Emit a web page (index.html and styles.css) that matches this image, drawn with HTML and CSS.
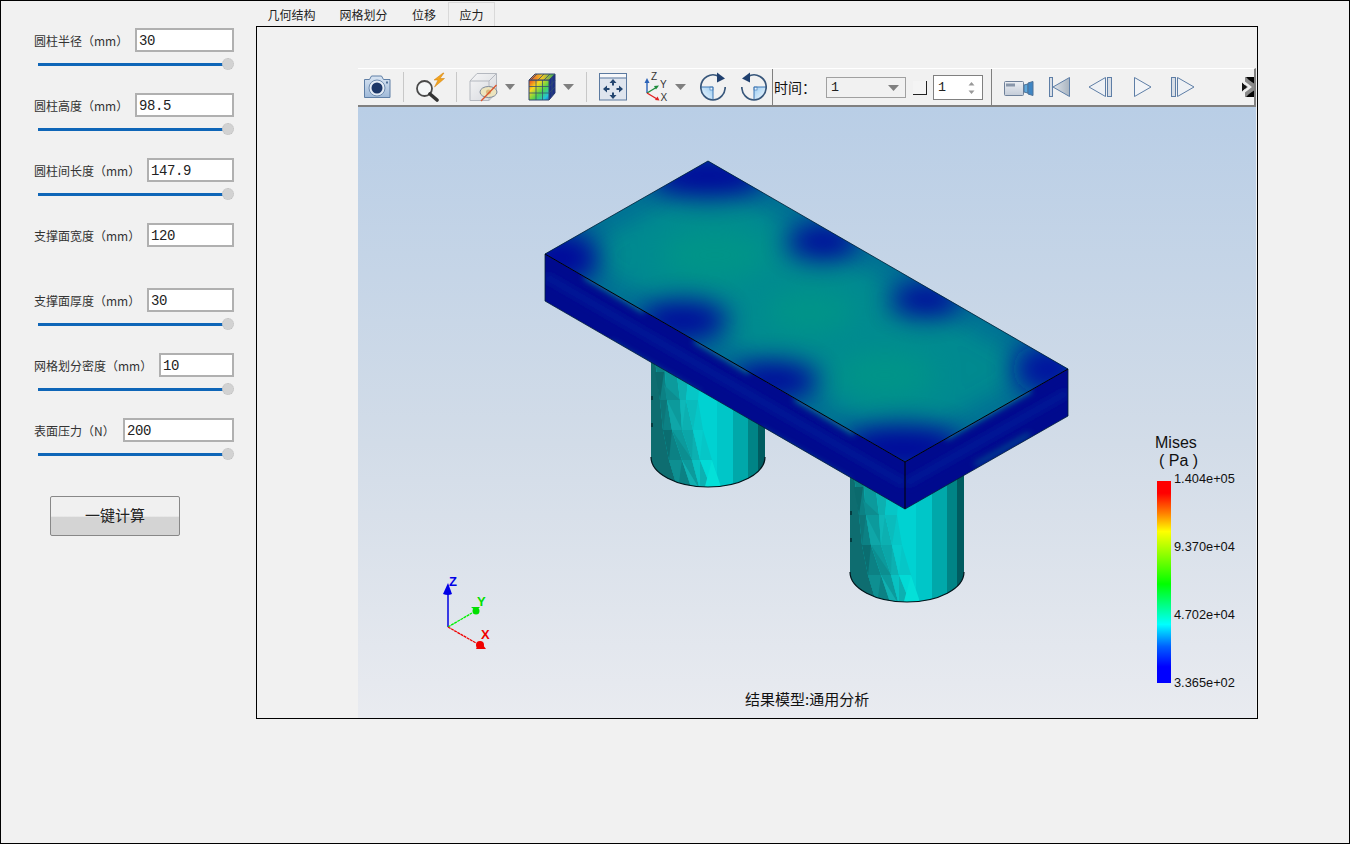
FILE: index.html
```html
<!DOCTYPE html>
<html lang="zh">
<head>
<meta charset="utf-8">
<title>应力</title>
<link rel="stylesheet" href="styles.css">
</head>
<body>
<div class="app">
  <aside class="side">
    <div class="row"><div class="line"><span class="lbl">圆柱半径&#xFF08;mm&#xFF09;</span><div class="field w99">30</div></div><div class="slider"><i class="track"></i><i class="thumb"></i></div></div>
    <div class="row"><div class="line"><span class="lbl">圆柱高度&#xFF08;mm&#xFF09;</span><div class="field w99">98.5</div></div><div class="slider"><i class="track"></i><i class="thumb"></i></div></div>
    <div class="row"><div class="line"><span class="lbl">圆柱间长度&#xFF08;mm&#xFF09;</span><div class="field w87">147.9</div></div><div class="slider"><i class="track"></i><i class="thumb"></i></div></div>
    <div class="row"><div class="line"><span class="lbl">支撑面宽度&#xFF08;mm&#xFF09;</span><div class="field w87">120</div></div></div>
    <div class="row"><div class="line"><span class="lbl">支撑面厚度&#xFF08;mm&#xFF09;</span><div class="field w87">30</div></div><div class="slider"><i class="track"></i><i class="thumb"></i></div></div>
    <div class="row"><div class="line"><span class="lbl">网格划分密度&#xFF08;mm&#xFF09;</span><div class="field w75">10</div></div><div class="slider"><i class="track"></i><i class="thumb"></i></div></div>
    <div class="row"><div class="line"><span class="lbl">表面压力&#xFF08;N&#xFF09;</span><div class="field w111">200</div></div><div class="slider"><i class="track"></i><i class="thumb"></i></div></div>
    <button class="calc" type="button">一键计算</button>
  </aside>
  <main class="main">
    <nav class="tabs">
      <span class="tab t1">几何结构</span>
      <span class="tab t2">网格划分</span>
      <span class="tab t3">位移</span>
      <span class="tab active">应力</span>
    </nav>
    <section class="frame">
      <div class="viewer">
        <div class="toolbar">
          <svg class="ml5" width="28" height="30" viewBox="0 0 28 30"><defs><linearGradient id="camg" x1="0" y1="0" x2="0" y2="1"><stop offset="0" stop-color="#d9e5f3"/><stop offset="1" stop-color="#9fb9d8"/></linearGradient></defs><path d="M1.500 7.500h5l2-3.500h10l2 3.500h6.500v18h-25.500z" fill="url(#camg)" stroke="#5f7fa6" stroke-linejoin="round"/><circle cx="14" cy="16" r="8" fill="#e4ecf6" stroke="#6f8cb0"/><circle cx="14" cy="16" r="5.500" fill="#1c3768"/><rect x="23" y="9.500" width="2" height="2" fill="#4f6f98"/></svg>
          <i class="sep ml12"></i>
          <svg class="ml12" width="30" height="30" viewBox="0 0 30 30"><circle cx="8.500" cy="16.500" r="7.500" fill="#f5f7f8" stroke="#4a4a4a" stroke-width="1.800"/><path d="M14 22l7 6" stroke="#333" stroke-width="3.600" stroke-linecap="round"/><path d="M27 1l-9 7h4l-3.500 7 10-8.500h-4.500l4-5.500z" fill="#f2a41e" stroke="#cf7d0c" stroke-width=".5"/></svg>
          <i class="sep ml10"></i>
          <svg class="ml12" width="30" height="30" viewBox="0 0 30 30"><defs><linearGradient id="boxg" x1="0" y1="0" x2="1" y2="1"><stop offset="0" stop-color="#f6f6f7"/><stop offset="1" stop-color="#d5d8dd"/></linearGradient></defs><path d="M1 9l7-7.500h19.500v19L20 28.500H1z" fill="url(#boxg)" stroke="#b4b8bf"/><path d="M1 9h19v19.500M20 9l7.500-7.500" fill="none" stroke="#b4b8bf"/><ellipse cx="19.500" cy="20" rx="8.500" ry="5.500" fill="#ece4be" stroke="#7e8a9a"/><circle cx="19.500" cy="20" r="2.500" fill="#dcb878"/><path d="M27.500 13L12 29" stroke="#d9552d" stroke-width="1.300"/></svg>
          <svg class="ml6 ar" width="10" height="30" viewBox="0 0 10 30"><path d="M0 12h10l-5 6z" fill="#7f7f7f"/></svg>
          <svg class="ml13" width="28" height="30" viewBox="0 0 28 30"><defs><linearGradient id="cg1" x1="0" y1="0" x2="1" y2="1"><stop offset="0" stop-color="#e8401f"/><stop offset=".3" stop-color="#f9d81e"/><stop offset=".6" stop-color="#4ed24c"/><stop offset=".85" stop-color="#22c4d8"/><stop offset="1" stop-color="#1e6fd0"/></linearGradient><linearGradient id="cg2" x1="0" y1="0" x2="1" y2="0"><stop offset="0" stop-color="#e9482a"/><stop offset=".5" stop-color="#f2c624"/><stop offset="1" stop-color="#2aa860"/></linearGradient></defs><path d="M21 8l6-6v19l-6 7z" fill="#1c2f88" stroke="#26386e"/><path d="M1 8h20v20H1z" fill="url(#cg1)" stroke="#32476f"/><path d="M1 8l6-6h20l-6 6z" fill="url(#cg2)" stroke="#32476f"/><path d="M8 8v20M14.500 8v20M1 14.500h20M1 21h20M9 2L3 8M16 2l-6 6M22 2l-6 6M24 5v19M21 14.500l6-6M21 21l6-6" stroke="#34506e" stroke-width=".8" fill="none"/></svg>
          <svg class="ml7 ar" width="11" height="30" viewBox="0 0 11 30"><path d="M0 12h11l-5.500 6z" fill="#7f7f7f"/></svg>
          <i class="sep ml12"></i>
          <svg class="ml12" width="28" height="30" viewBox="0 0 28 30"><rect x=".5" y="1.500" width="27" height="26.500" fill="#dfe5ee" stroke="#5c7aa0"/><rect x="1" y="2" width="26" height="3.500" fill="#f7f8fa"/><path d="M1 6h26" stroke="#5c7aa0"/><path d="M14 13.500V10M14 20.500V24M10.500 17H7M17.500 17H21" stroke="#23456f" stroke-width="2" fill="none"/><path d="M14 7l-3.500 4h7zM14 27l-3.500-4h7zM4 17l4-3.500v7zM24 17l-4-3.500v7z" fill="#23456f"/></svg>
          <svg class="ml16" width="26" height="30" viewBox="0 0 26 30"><path d="M4 21V9" stroke="#2a62b8" stroke-width="1.400"/><path d="M4 6l-2.500 5h5z" fill="#2a62b8"/><path d="M4 21l10-6" stroke="#1e8c3c" stroke-width="1.400"/><path d="M16 13.500l-5 .5 2 3.500z" fill="#1e8c3c"/><path d="M4 21l10 6" stroke="#e02020" stroke-width="1.400"/><path d="M16.500 28.500l-2-4-2.500 3.500z" fill="#e02020"/><text class="ax" x="8" y="8">Z</text><text class="ax" x="17" y="16">Y</text><text class="ax" x="17.500" y="29">X</text></svg>
          <svg class="ml6 ar" width="11" height="30" viewBox="0 0 11 30"><path d="M0 12h11l-5.500 6z" fill="#7f7f7f"/></svg>
          <svg class="ml14" width="26" height="30" viewBox="0 0 26 30"><defs><linearGradient id="qg" x1="0" y1="1" x2="1" y2="0"><stop offset="0" stop-color="#f4f9fd"/><stop offset="1" stop-color="#9ccdf2"/></linearGradient><linearGradient id="qg2" x1="1" y1="1" x2="0" y2="0"><stop offset="0" stop-color="#f4f9fd"/><stop offset="1" stop-color="#9ccdf2"/></linearGradient></defs><path d="M1 15h12v13A12.500 13 0 0 1 1 15z" fill="url(#qg)"/><rect x="10" y="15" width="3" height="3" fill="#eaf4fc" stroke="#3d76b4" stroke-width=".6"/><path d="M1 15h12v13" fill="none" stroke="#3d76b4"/><path d="M25.200 15A12.200 13 0 0 1 13 28 12.200 13 0 0 1 .8 15 12.200 12.500 0 0 1 19 4.500" fill="none" stroke="#37567a" stroke-width="1.700"/><path d="M17 .5l8 6-8 4z" fill="#1f3f6e"/></svg>
          <svg class="ml15" width="26" height="30" viewBox="0 0 26 30"><path d="M25 15H13v13A12.500 13 0 0 0 25 15z" fill="url(#qg2)"/><rect x="13" y="15" width="3" height="3" fill="#eaf4fc" stroke="#3d76b4" stroke-width=".6"/><path d="M25 15H13v13" fill="none" stroke="#3d76b4"/><path d="M.8 15A12.200 13 0 0 0 13 28 12.200 13 0 0 0 25.200 15 12.200 12.500 0 0 0 7 4.500" fill="none" stroke="#37567a" stroke-width="1.700"/><path d="M9 .5l-8 6 8 4z" fill="#1f3f6e"/></svg>
          <i class="divider ml5 d1"></i>
          <span class="time">时间&#xFF1A;</span>
          <div class="combo"><span>1</span><svg width="11" height="6" viewBox="0 0 11 6"><path d="M0 0h11L5.500 6z" fill="#808080"/></svg></div>
          <i class="check"></i>
          <div class="spin"><span>1</span><svg width="7" height="14" viewBox="0 0 7 14"><path d="M3.500 1L6.500 4.500h-6zM3.500 13L.5 9.500h6z" fill="#999"/></svg></div>
          <i class="divider d2"></i>
          <svg class="ml11" width="31" height="30" viewBox="0 0 31 30"><defs><linearGradient id="vg" x1="0" y1="0" x2="0" y2="1"><stop offset="0" stop-color="#eceff4"/><stop offset="1" stop-color="#c4ccd8"/></linearGradient></defs><rect x="1.500" y="9.500" width="19" height="14" rx="1" fill="url(#vg)" stroke="#6f819a"/><rect x="3" y="11.500" width="9" height="3" fill="#8896aa"/><path d="M21 13l4-1v9l-4-1z" fill="#5fa8dc" stroke="#4f7398"/><path d="M25 11l5-1.500v14L25 22z" fill="#3f86c4" stroke="#4f7398"/></svg>
          <svg class="ml14" width="23" height="30" viewBox="0 0 23 30"><defs><linearGradient id="tg" x1="0" y1="0" x2="1" y2="0"><stop offset="0" stop-color="#dfe4ea"/><stop offset="1" stop-color="#a9b4c0"/></linearGradient></defs><rect x="1.500" y="5.500" width="3" height="19" fill="#d8dee6" stroke="#5e7ea6"/><path d="M5 15L21.500 5.500v19z" fill="url(#tg)" stroke="#5e7ea6"/></svg>
          <svg class="ml17" width="25" height="30" viewBox="0 0 25 30"><path d="M1 15L17.500 5.500v19z" fill="#eef1f5" stroke="#5e7ea6"/><rect x="19.500" y="5.500" width="4" height="19" fill="#d8dee6" stroke="#5e7ea6"/></svg>
          <svg class="ml20" width="19" height="30" viewBox="0 0 19 30"><path d="M1.500 5.500L18 15 1.500 24.500z" fill="#f2f4f7" stroke="#5e7ea6"/></svg>
          <svg class="ml18" width="25" height="30" viewBox="0 0 25 30"><rect x="1.500" y="5.500" width="4" height="19" fill="#d8dee6" stroke="#5e7ea6"/><path d="M7.500 5.500L24 15 7.500 24.500z" fill="#eef1f5" stroke="#5e7ea6"/></svg>
          <svg class="grip" width="12" height="20" viewBox="0 0 12 20"><rect x="3" y="0" width="9" height="20" fill="#8a8a8a"/><path d="M4 0h8v6.500l-5-3.500zM4 20h8v-6.500l-5 3.500z" fill="#050505"/><path d="M0 5.500L5 10 0 14.500z" fill="#111"/><path d="M1 3v3l5 4-5 4v3l9-7z" fill="#efefef"/></svg>
        </div>
        <div class="scene">
          <svg class="model" width="898" height="611" viewBox="358 107 898 611">
            <defs>
              <clipPath id="cylclip"><path d="M651 350V457A57 30 0 0 0 765 457V350z"/></clipPath>
              <clipPath id="topclip"><path d="M708 161L545 254 905 462 1068 369z"/></clipPath>
              <clipPath id="leftclip"><path d="M545 254L905 462V509L545 301z"/></clipPath>
              <clipPath id="rightclip"><path d="M905 462L1068 369V416L905 509z"/></clipPath>
              <filter id="b14" x="-60%" y="-60%" width="220%" height="220%"><feGaussianBlur stdDeviation="14"/></filter>
              <filter id="b12" x="-80%" y="-80%" width="260%" height="260%"><feGaussianBlur stdDeviation="13"/></filter>
              <filter id="b4" x="-30%" y="-300%" width="160%" height="700%"><feGaussianBlur stdDeviation="3"/></filter>
              <g id="cyl">
                <g clip-path="url(#cylclip)">
                  <rect x="651" y="350" width="114" height="140" fill="#00d2d2"/>
                  <rect x="717" y="350" width="16" height="140" fill="#00c6c8"/>
                  <rect x="733" y="350" width="15" height="140" fill="#00a8aa"/>
                  <rect x="748" y="350" width="10" height="140" fill="#008486"/>
                  <rect x="758" y="350" width="7" height="140" fill="#005c60"/>
                  <path d="M651 360H655L660 400 663 430 669 460 678 490H651z" fill="#0e6d70"/>
                  <path d="M655 360H664L667 400 672 430 682 460 692 490H678L669 460 663 430 660 400z" fill="#0c8184"/>
                  <path d="M664 360H675L680 400 682 430 692 460 700 490H692L682 460 672 430 667 400z" fill="#0c9a9c"/>
                  <path d="M675 360H690L686 400 693 430 700 460 712 490H700L692 460 682 430 680 400z" fill="#0cb0b1"/>
                  <path d="M690 360H702L698 400 703 430 712 460 722 490H712L700 460 693 430 686 400z" fill="#06c6c7"/>
                  <path d="M655 372L664 372 660 400z" fill="#0b6a6d"/>
                  <path d="M660 400L667 400 663 430z" fill="#0d7679"/>
                  <path d="M663 430L672 430 669 460z" fill="#0b6d70"/>
                  <path d="M669 460L682 460 678 490z" fill="#0e8f91"/>
                  <path d="M664 385L680 400 667 400z" fill="#0d8d90"/>
                  <path d="M667 400L682 430 672 430z" fill="#0fa6a8"/>
                  <path d="M672 430L692 460 682 460z" fill="#0c8e90"/>
                  <path d="M682 460L700 490 692 490z" fill="#10b0b1"/>
                  <path d="M680 400L686 400 682 430z" fill="#0eb8b9"/>
                  <path d="M682 430L693 430 692 460z" fill="#0ba6a8"/>
                  <path d="M692 460L700 460 700 490z" fill="#08c2c2"/>
                  <path d="M686 400L698 400 693 430z" fill="#0abcbd"/>
                  <path d="M693 430L703 430 700 460z" fill="#06cccc"/>
                  <path d="M700 460L712 460 712 490z" fill="#02dad6"/>
                  <path d="M712 460L722 490H704z" fill="#04e0d8"/>
                  <path d="M651 398h2M651 425h2" stroke="#063c40" stroke-width="4" fill="none"/>
                </g>
                <path d="M651 457A57 30 0 0 0 765 457" fill="none" stroke="#03141a" stroke-width="1.200"/>
              </g>
            </defs>
            <use href="#cyl"/>
            <use href="#cyl" transform="translate(199 115)"/>

            <path d="M708 161L545 254 905 462 1068 369z" fill="#008a90"/>
            <g clip-path="url(#topclip)">
              <g filter="url(#b14)">
                <ellipse cx="715" cy="255" rx="55" ry="26" fill="#009488"/>
                <ellipse cx="810" cy="312" rx="45" ry="22" fill="#009488"/>
                <ellipse cx="885" cy="375" rx="50" ry="24" fill="#009488"/>
                <path d="M708 161L545 254 905 462 1068 369z" fill="none" stroke="#00509a" stroke-width="16" opacity=".85"/>
              </g>
              <g filter="url(#b12)" opacity=".92">
                <ellipse cx="708" cy="176" rx="58" ry="22" fill="#00009c"/>
                <ellipse cx="560" cy="258" rx="40" ry="26" fill="#00009c"/>
                <ellipse cx="822" cy="242" rx="36" ry="18" fill="#00009c"/>
                <ellipse cx="925" cy="300" rx="36" ry="17" fill="#00009c"/>
                <ellipse cx="1048" cy="369" rx="36" ry="26" fill="#000aa0"/>
                <ellipse cx="903" cy="448" rx="60" ry="24" fill="#00009c"/>
                <ellipse cx="684" cy="320" rx="44" ry="20" fill="#00009c"/>
                <ellipse cx="775" cy="380" rx="44" ry="19" fill="#00009c"/>
              </g>
            </g>
            <path d="M545 254L905 462V509L545 301z" fill="#000a8e"/>
            <g clip-path="url(#leftclip)">
              <g filter="url(#b4)">
                <path d="M545 276L905 484" stroke="#0028a0" stroke-width="10" fill="none" opacity=".45"/>
                <path d="M585 276L645 311" stroke="#0a7a90" stroke-width="6" fill="none"/>
                <path d="M695 340L750 372" stroke="#0a7a90" stroke-width="6" fill="none"/>
                <path d="M795 398L855 433" stroke="#0a7a90" stroke-width="6" fill="none"/>
                <path d="M610 342L700 394" stroke="#0a6a90" stroke-width="3" fill="none"/>
                <path d="M760 429L850 481" stroke="#0a6a90" stroke-width="3" fill="none"/>
              </g>
            </g>
            <path d="M905 462L1068 369V416L905 509z" fill="#000a8e"/>
            <g clip-path="url(#rightclip)">
              <g filter="url(#b4)">
                <path d="M905 484L1068 392" stroke="#0028a0" stroke-width="10" fill="none" opacity=".45"/>
                <path d="M945 437L1030 389" stroke="#0a7a90" stroke-width="7" fill="none"/>
                <path d="M975 465L1030 434" stroke="#0a6a90" stroke-width="3" fill="none"/>
              </g>
            </g>
            <path d="M545 254L708 161 1068 369M545 254V301L905 509 1068 416V369" fill="none" stroke="#02213a" stroke-width=".8"/>
            <path d="M545 254L905 462 1068 369M905 462V509" fill="none" stroke="#000" stroke-width="1"/>

            <path d="M448 627V592" stroke="#0000e0" stroke-width="1.500"/>
            <path d="M448 583l-5 11q5 2 9 0z" fill="#0000e6"/>
            <path d="M448 627L472 613" stroke="#00f000" stroke-width="1.300" stroke-dasharray="3 .6"/>
            <circle cx="476" cy="611" r="3.500" fill="#00e000"/>
            <path d="M471 607h9l-4 4z" fill="#00e000"/>
            <path d="M448 627L476 643" stroke="#f00000" stroke-width="1.300" stroke-dasharray="3 .6"/>
            <circle cx="480" cy="645" r="4" fill="#f00000"/>
            <path d="M480 641l6 8h-10z" fill="#f00000"/>
            <text class="tri tz" x="449" y="586">Z</text>
            <text class="tri ty" x="477" y="606">Y</text>
            <text class="tri tx" x="481" y="639">X</text>
          </svg>
          <div class="legend">
            <div class="ltitle">Mises</div>
            <div class="lunit">( Pa )</div>
            <div class="lbody">
              <div class="lbar"></div>
              <div class="lticks"><span>1.404e+05</span><span>9.370e+04</span><span>4.702e+04</span><span>3.365e+02</span></div>
            </div>
          </div>
          <div class="caption">结果模型:通用分析</div>
        </div>
      </div>
    </section>
  </main>
</div>
</body>
</html>
```
FILE: styles.css
```css
* { box-sizing: border-box; }
html, body { margin: 0; padding: 0; }
body { width: 1350px; height: 844px; overflow: hidden; font-family: "Noto Sans CJK SC", "Liberation Sans", sans-serif; font-size: 12px; color: #222; }
.app { width: 1350px; height: 844px; border: 1px solid #000; background: #f1f1f1; display: flex; align-items: flex-start; }

.side { width: 255px; flex: none; padding-top: 27px; }
.row { height: 65px; margin-left: 33px; width: 200px; }
.line { display: flex; justify-content: space-between; align-items: flex-start; height: 24px; }
.lbl { white-space: nowrap; line-height: 25px; color: #333; }
.field { height: 24px; border: 2px solid #b0b0b0; background: #fff; padding-left: 2px; font-family: "Liberation Mono", monospace; font-size: 14px; letter-spacing: -0.4px; line-height: 22px; color: #222; }
.w99 { width: 99px; }
.w87 { width: 87px; }
.w75 { width: 75px; }
.w111 { width: 111px; }
.slider { display: flex; align-items: center; margin: 6px 0 0 4px; height: 12px; width: 196px; }
.track { display: block; flex: 1; height: 3px; background: #0f66b8; }
.thumb { display: block; width: 12px; height: 12px; flex: none; margin-left: -6px; border-radius: 50%; background: #d2d2d2; border: 1px dotted #c0c0c0; }
.calc { display: block; margin: 13px 0 0 49px; width: 130px; height: 40px; padding: 0 0 4px; border: 1px solid #888; border-radius: 2px; background: linear-gradient(#f0f0f0 0, #f0f0f0 51%, #d4d4d4 52%, #d4d4d4 100%); font: 15px "Noto Sans CJK SC", sans-serif; color: #222; }

.main { width: 1002px; flex: none; }
.tabs { display: flex; height: 25px; align-items: flex-end; }
.tab { display: block; height: 24px; line-height: 25px; text-align: center; color: #222; }
.t1 { width: 71px; }
.t2 { width: 73px; }
.t3 { width: 48px; }
.active { width: 47px; border: 1px solid #d9d9d9; border-bottom: 0; line-height: 23px; }
.frame { height: 693px; border: 1px solid #000; padding: 41px 0 0 101px; }
.viewer { width: 898px; height: 650px; display: flex; flex-direction: column; }

.toolbar { height: 39px; flex: none; display: flex; align-items: flex-start; padding-top: 3px; background: #f1f1f1; border-top: 1px solid #fff; border-bottom: 2px solid #808080; border-right: 2px solid #808080; }
.toolbar svg { display: block; flex: none; }
.sep { display: block; width: 1px; height: 30px; background: #c8c8c8; flex: none; }
.divider { display: block; width: 1px; height: 37px; margin-top: -3px; background: #808080; flex: none; }
.ml5 { margin-left: 5px; }
.ml6 { margin-left: 6px; }
.ml7 { margin-left: 7px; }
.ml10 { margin-left: 10px; }
.ml11 { margin-left: 11px; }
.ml12 { margin-left: 12px; }
.ml13 { margin-left: 13px; }
.ml14 { margin-left: 14px; }
.ml15 { margin-left: 15px; }
.ml16 { margin-left: 16px; }
.ml17 { margin-left: 17px; }
.ml18 { margin-left: 18px; }
.ml20 { margin-left: 20px; }
.ax { font: 10px "Liberation Sans", sans-serif; fill: #333; }
.time { width: 52px; margin-left: 1px; font-size: 14px; line-height: 30px; color: #111; flex: none; white-space: nowrap; }
.combo { width: 80px; height: 21px; margin-top: 5px; border: 1px solid #a0a0a0; display: flex; align-items: center; justify-content: space-between; padding: 0 6px 0 4px; font: 13.33px "Liberation Mono", monospace; flex: none; }
.check { display: block; width: 14px; height: 14px; margin: 9px 0 0 7px; background: #f4f4f4; border-right: 1px solid #222; border-bottom: 1px solid #222; flex: none; }
.spin { width: 50px; height: 25px; margin: 3px 0 0 6px; background: #fff; border: 1px solid #808080; display: flex; align-items: center; justify-content: space-between; padding: 0 7px 0 4px; font: 13.33px "Liberation Mono", monospace; flex: none; }
.d2 { margin-left: 8px; }
.toolbar .grip { margin: 5px 0 0 47px; }

.scene { position: relative; flex: 1; background: linear-gradient(#b9cee6, #d2dce8 55%, #e9ebf0); overflow: hidden; }
.model { display: block; }
.tri { font: bold 13px "Liberation Sans", sans-serif; }
.tz { fill: #0000e6; }
.ty { fill: #00e000; }
.tx { fill: #f00000; }

.legend { position: absolute; left: 797px; top: 327px; width: 90px; color: #111; font-family: "Liberation Sans", sans-serif; }
.ltitle { font-size: 16px; line-height: 18px; }
.lunit { font-size: 16px; line-height: 17px; padding-left: 4px; white-space: pre; }
.lbody { display: flex; margin-top: 12px; }
.lbar { width: 14px; height: 202px; margin-left: 2px; background: linear-gradient(#ff0000 0, #ff0000 6%, #ff8000 16%, #ffff00 25%, #00ff00 51%, #00ffff 71%, #0060ff 82%, #0000ff 92%, #0000ff 100%); }
.lticks { display: flex; flex-direction: column; justify-content: space-between; height: 220px; margin: -10px 0 0 3px; font-size: 12.8px; line-height: 16px; }

.caption { position: absolute; left: 387px; top: 582px; font-size: 15px; line-height: 20px; color: #111; white-space: nowrap; }
```
